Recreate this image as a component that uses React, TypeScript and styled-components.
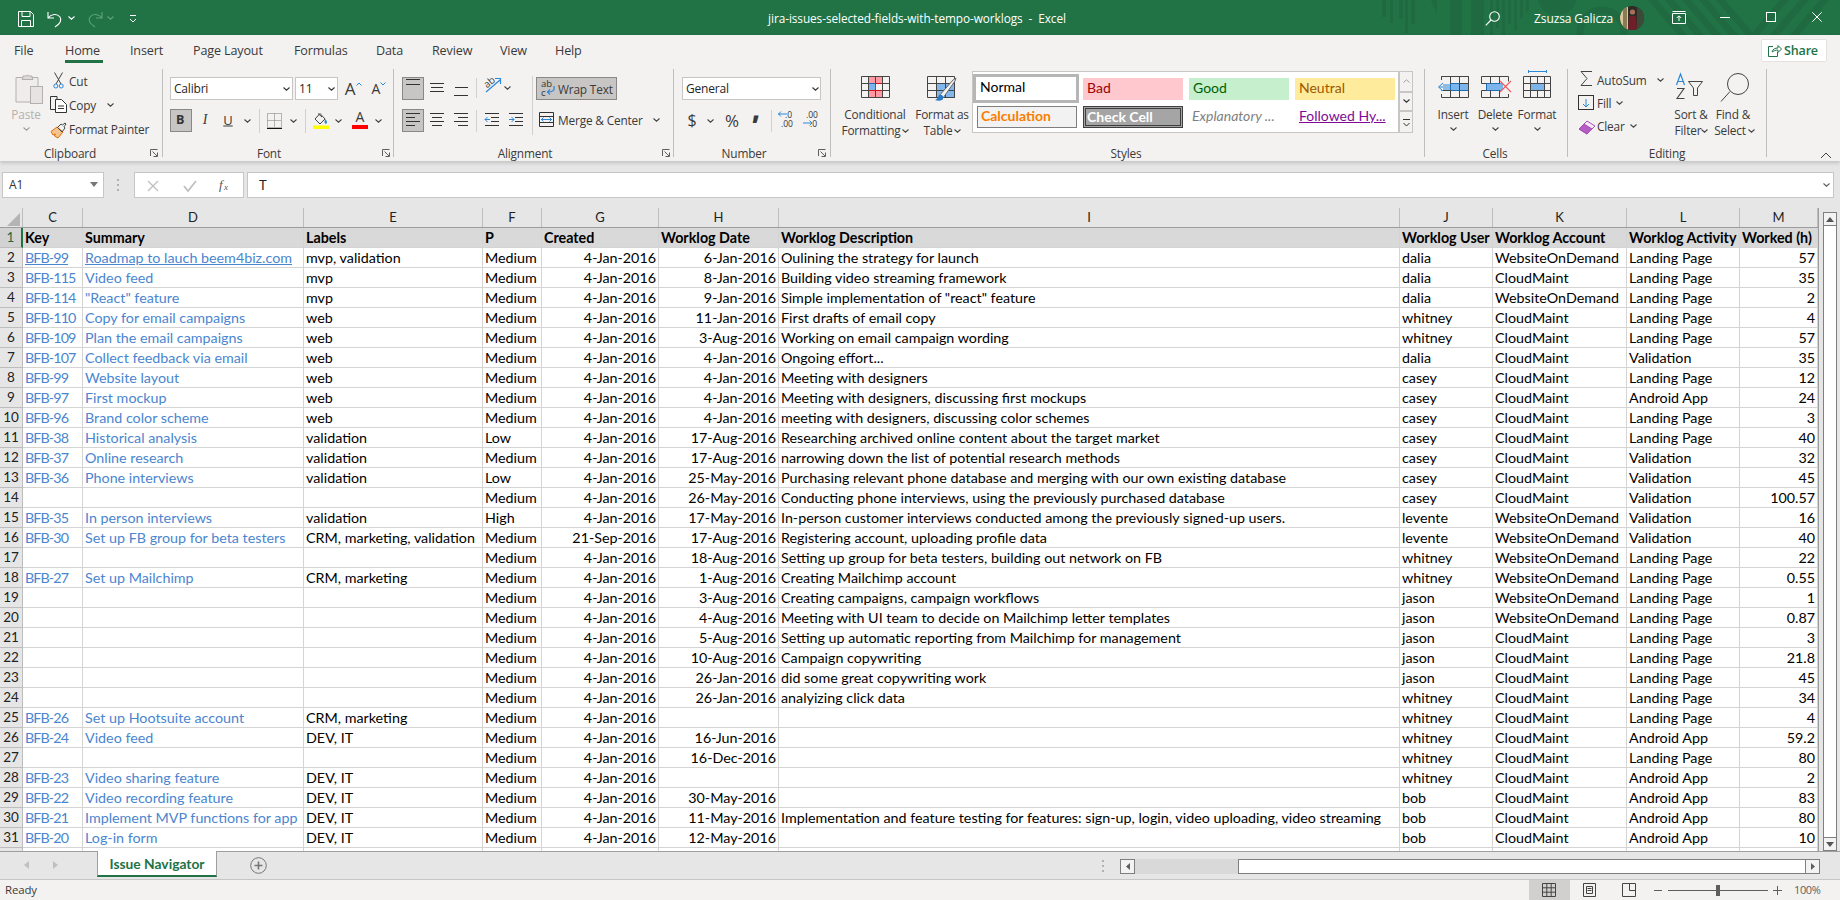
import React from "react";
import styled, { createGlobalStyle } from "styled-components";

const Global = createGlobalStyle`
  html, body { margin: 0; padding: 0; background: #e6e6e6; overflow: hidden; }
  #root { width: 1840px; height: 900px; }
`;
const UI = `"Open Sans","Noto Sans",sans-serif`;
const CELL = `Lato,"Open Sans",sans-serif`;
type P = { $x: number; $y: number };

const Window = styled.div`position: relative; width: 1840px; height: 900px; overflow: hidden; background: #e6e6e6; font-family: ${UI};`;
const TitleBar = styled.header`position: absolute; left: 0; top: 0; width: 1840px; height: 35px; background: #217346; color: #fff;`;
const TitleText = styled.div`position: absolute; left: 767px; top: 0; width: 300px; line-height: 36px; font-size: 11.8px; letter-spacing: -0.07px; white-space: pre; text-align: center;`;
const UserName = styled.div`position: absolute; left: 1534px; top: 0; line-height: 37px; font-size: 12px; letter-spacing: -0.1px; white-space: nowrap;`;
const Ic = styled.svg<P>`position: absolute; left: ${p => p.$x}px; top: ${p => p.$y}px; overflow: visible; display: block;`;

const Ribbon = styled.section`position: absolute; left: 0; top: 35px; width: 1840px; height: 126px; background: #f3f2f1; box-shadow: 0 2px 4px rgba(0,0,0,.16);`;
const Tab = styled.div<{ $x: number }>`
  position: absolute; left: ${p => p.$x}px; top: 6px; line-height: 19px; font-size: 12.6px; letter-spacing: -0.15px; color: #3b3a39; white-space: nowrap;
`;
const TabLine = styled.div`position: absolute; left: 65px; top: 25px; width: 38px; height: 3px; background: #217346;`;
const ShareBtn = styled.div`position: absolute; left: 1761px; top: 4px; width: 66px; height: 23px; box-sizing: border-box; background: #fff; border: 1px solid #e4e2e0; border-radius: 2px; color: #217346; font-size: 12.6px; font-weight: 600; line-height: 21px; padding-left: 22px; letter-spacing: -0.2px;`;
const Sep = styled.div<{ $x: number; $t?: number; $h?: number }>`position: absolute; left: ${p => p.$x}px; top: ${p => p.$t ?? 34}px; height: ${p => p.$h ?? 88}px; width: 1px; background: ${p => (p.$h ? "#d2d0ce" : "#c0bebc")};`;
const Lbl = styled.div<P & { $c?: boolean; $muted?: boolean }>`
  position: absolute; left: ${p => p.$x}px; top: ${p => p.$y - 35}px; transform: translate(${p => (p.$c ? "-50%" : "0")}, -50%);
  font-size: 11.85px; letter-spacing: -0.17px; line-height: 16px; color: ${p => (p.$muted ? "#b3b0ad" : "#3b3a39")}; white-space: nowrap;
`;
const Select = styled.div<{ $x: number; $w: number }>`
  position: absolute; left: ${p => p.$x}px; top: 42px; width: ${p => p.$w}px; height: 23px; box-sizing: border-box; background: #fff; border: 1px solid #c8c6c4;
  font-size: 12px; line-height: 21px; padding-left: 3px; color: #262626; letter-spacing: -0.2px;
`;
const Pressed = styled.div<{ $x: number; $y: number; $w: number }>`
  position: absolute; left: ${p => p.$x}px; top: ${p => p.$y - 35}px; width: ${p => p.$w}px; height: 23px; box-sizing: border-box; background: #c8c6c4; border: 1px solid #8a8886;
`;
const BoldGlyph = styled.div`position: absolute; left: 176px; top: 77px; font: 700 12.5px/16px ${UI}; color: #333;`;
const Glyph = styled.div<P & { $size: number; $italic?: boolean; $under?: boolean; $heavy?: boolean }>`
  position: absolute; left: ${p => p.$x}px; top: ${p => p.$y - 35}px; transform: translate(-50%, -50%); font-size: ${p => p.$size}px; line-height: 1; color: #3b3a39;
  font-weight: ${p => (p.$heavy ? 800 : 400)};
  font-style: ${p => (p.$italic ? "italic" : "normal")}; text-decoration: ${p => (p.$under ? "underline" : "none")}; font-family: ${p => (p.$italic ? `"Liberation Serif",serif` : UI)};
`;
const Gallery = styled.div`position: absolute; left: 972px; top: 36px; width: 427px; height: 62px; box-sizing: border-box; background: #fff; border: 1px solid #c8c6c4;`;
const StyleChip = styled.div<{ $x: number; $y: number; $bg?: string; $fg: string; $bold?: boolean; $italic?: boolean; $border?: string; $under?: boolean; $lh: number; $pad: number }>`
  position: absolute; left: ${p => p.$x - 972}px; top: ${p => p.$y - 71}px; width: 100px; height: 22px; box-sizing: border-box; padding-left: ${p => p.$pad}px;
  background: ${p => p.$bg ?? "transparent"}; color: ${p => p.$fg}; border: ${p => p.$border ?? "none"};
  font-family: ${CELL}; font-size: 14px; line-height: ${p => p.$lh}px; font-weight: ${p => (p.$bold ? 700 : 400)}; font-style: ${p => (p.$italic ? "italic" : "normal")};
  white-space: nowrap; overflow: hidden; text-decoration: ${p => (p.$under ? "underline" : "none")};
`;
const NormalChip = styled.div`position: absolute; left: 0; top: 2px; width: 106px; height: 29px; box-sizing: border-box; border: 3px solid #b6b6b6; background: #fff; color: #000; font-family: ${CELL}; font-size: 14px; line-height: 20px; padding-left: 4px;`;
const GalBtn = styled.div<{ $t: number; $h: number }>`position: absolute; left: 1399px; top: ${p => p.$t - 35}px; width: 14px; height: ${p => p.$h}px; box-sizing: border-box; background: #f3f2f1; border: 1px solid #c8c6c4;`;

const FormulaBar = styled.section`position: absolute; left: 0; top: 165px; width: 1840px; height: 43px;`;
const NameBox = styled.div`position: absolute; left: 2px; top: 7px; width: 102px; height: 26px; box-sizing: border-box; background: #fff; border: 1px solid #c8c6c4; font: 12px/24px ${UI}; color: #333; padding-left: 6px;`;
const FxBox = styled.div`position: absolute; left: 134px; top: 7px; width: 110px; height: 26px; box-sizing: border-box; background: #fff; border: 1px solid #c8c6c4;`;
const FInput = styled.div`position: absolute; left: 247px; top: 7px; width: 1587px; height: 26px; box-sizing: border-box; background: #fff; border: 1px solid #c8c6c4; font: 13px/24px ${CELL}; padding-left: 11px; color: #222;`;
const Grip = styled.div`position: absolute; left: 117px; top: 14px; width: 2px; height: 2px; background: #b3b0ad; box-shadow: 0 5px 0 #b3b0ad, 0 10px 0 #b3b0ad;`;

const Sheet = styled.main`position: absolute; left: 0; top: 208px; width: 1818px; height: 643px; overflow: hidden; background: #fff; border-right: 1px solid #9e9e9e; box-sizing: content-box;`;
const COLS = "23px 60px 221px 179px 59px 117px 120px 621px 93px 134px 113px 78px";
const ColHead = styled.div`display: grid; grid-template-columns: ${COLS}; height: 20px; background: #e6e6e6; box-sizing: border-box; border-bottom: 1px solid #9c9c9c;`;
const ColCell = styled.div`height: 19px; box-sizing: border-box; border-right: 1px solid #bdbdbd; font: 13px/19px ${CELL}; color: #222; text-align: center; position: relative;`;
const Row = styled.div<{ $head?: boolean }>`display: grid; grid-template-columns: ${COLS}; height: 20px; background: ${p => (p.$head ? "#d9d9d9" : "#fff")};`;
const RowNum = styled.div<{ $sel?: boolean }>`
  box-sizing: border-box; height: 20px; background: ${p => (p.$sel ? "#d2d2d2" : "#e6e6e6")}; color: ${p => (p.$sel ? "#1f6b41" : "#222")};
  border-bottom: 1px solid #bdbdbd; border-right: ${p => (p.$sel ? "2px solid #217346" : "1px solid #bdbdbd")};
  font: 13.5px/19px ${CELL}; text-align: center;
`;
const Cell = styled.div<{ $right?: boolean; $link?: boolean; $under?: boolean; $head?: boolean; $key?: boolean }>`
  box-sizing: border-box; height: 20px; border-right: 1px solid #d4d4d4; border-bottom: 1px solid #d4d4d4; padding: 0 2px;
  font: ${p => (p.$head ? 700 : 400)} 14.3px/19px ${CELL}; color: ${p => (p.$link ? "#4a86cf" : "#000")};
  letter-spacing: ${p => (p.$key ? "-0.9px" : "0")};
  text-align: ${p => (p.$right ? "right" : "left")}; white-space: nowrap; overflow: ${p => (p.$head ? "hidden" : "visible")}; text-decoration: ${p => (p.$under ? "underline" : "none")};
`;
const VTrack = styled.div`position: absolute; left: 1823px; top: 212px; width: 14px; height: 639px; box-sizing: border-box; background: #fff; border: 1px solid #7f7f7f;`;
const VBtn = styled.div<{ $bottom?: boolean }>`position: absolute; left: -1px; ${p => (p.$bottom ? "bottom: -1px" : "top: -1px")}; width: 14px; height: 14px; box-sizing: border-box; background: #f3f3f3; border: 1px solid #7f7f7f;`;

const TabBar = styled.footer`position: absolute; left: 0; top: 851px; width: 1840px; height: 29px; background: #e6e6e6; border-top: 1px solid #9e9e9e; border-bottom: 1px solid #c8c6c4; box-sizing: border-box;`;
const SheetTab = styled.div`position: absolute; left: 97px; top: -1px; width: 120px; height: 26px; box-sizing: border-box; background: #fff; border: 1px solid #9e9e9e; border-top: 0; border-bottom: 2px solid #217346; font: 700 13.8px/26px ${CELL}; color: #217346; text-align: center;`;
const HTrack = styled.div`position: absolute; left: 1120px; top: 7px; width: 700px; height: 15px; background: #d9d9d9;`;
const HBtn = styled.div<{ $right?: boolean }>`position: absolute; ${p => (p.$right ? "right: 0" : "left: 0")}; top: 0; width: 15px; height: 15px; box-sizing: border-box; background: #f3f3f3; border: 1px solid #7f7f7f;`;
const HThumb = styled.div`position: absolute; left: 118px; top: 0; width: 568px; height: 15px; box-sizing: border-box; background: #fff; border: 1px solid #7f7f7f;`;
const StatusBar = styled.footer`position: absolute; left: 0; top: 880px; width: 1840px; height: 20px; background: #f3f2f1; font-size: 11.4px; color: #3b3a39;`;
const Ready = styled.div`position: absolute; left: 5px; top: 0; line-height: 20px; letter-spacing: -0.1px;`;
const ViewActive = styled.div`position: absolute; left: 1529px; top: 0; width: 41px; height: 20px; background: #d2d0ce;`;
const Zoom = styled.div`position: absolute; left: 1794px; top: 0; line-height: 20px; letter-spacing: -0.4px; color: #605e5c; font-size: 11px;`;
const Slider = styled.div`position: absolute; left: 1668px; top: 10px; width: 100px; height: 1px; background: #605e5c;`;
const SliderThumb = styled.div`position: absolute; left: 48px; top: -5px; width: 4px; height: 11px; background: #605e5c;`;
const Blue = "#2b88d8";

const Chev = ({ x, y, c = "#444" }: { x: number; y: number; c?: string }) => (
  <Ic $x={x - 3.5} $y={y - 2} width="7" height="4" viewBox="0 0 7 4"><path d="M.5.5 3.5 3.2 6.5.5" fill="none" stroke={c} strokeWidth="1.1" /></Ic>
);
/* chevron in the ribbon, given in page coordinates */
const RC = ({ x, y, c }: { x: number; y: number; c?: string }) => <Chev x={x} y={y - 35} c={c} />;
const Launcher = ({ x }: { x: number }) => (
  <Ic $x={x - 4} $y={114} width="8" height="8" viewBox="0 0 8 8" fill="none" stroke="#605e5c"><path d="M.5 7V.5H7.5M7.5 3.500v4h-4M2.500 2.500l4.500 4.500" /></Ic>
);
const Lines = ({ x, y, rows }: { x: number; y: number; rows: [number, number, number][] }) => (
  <Ic $x={x} $y={y} width="15" height="16" viewBox="0 0 15 16" stroke="#333" strokeWidth="1">
    {rows.map((r, i) => <line key={i} x1={r[0]} x2={r[1]} y1={r[2] + 0.5} y2={r[2] + 0.5} />)}
  </Ic>
);

const LP = "Landing Page", AA = "Android App", CM = "CloudMaint", WD = "WebsiteOnDemand", V = "Validation", M = "Medium", J = "4-Jan-2016";
type R = [string, string, string, string, string, string, string, string, string, string, string];
const rows: R[] = [
  ["BFB-99", "Roadmap to lauch beem4biz.com", "mvp, validation", M, J, "6-Jan-2016", "Oulining the strategy for launch", "dalia", WD, LP, "57"],
  ["BFB-115", "Video feed", "mvp", M, J, "8-Jan-2016", "Building video streaming framework", "dalia", CM, LP, "35"],
  ["BFB-114", "\"React\" feature", "mvp", M, J, "9-Jan-2016", "Simple implementation of \"react\" feature", "dalia", WD, LP, "2"],
  ["BFB-110", "Copy for email campaigns", "web", M, J, "11-Jan-2016", "First drafts of email copy", "whitney", CM, LP, "4"],
  ["BFB-109", "Plan the email campaigns", "web", M, J, "3-Aug-2016", "Working on email campaign wording", "whitney", CM, LP, "57"],
  ["BFB-107", "Collect feedback via email", "web", M, J, "4-Jan-2016", "Ongoing effort...", "dalia", CM, V, "35"],
  ["BFB-99", "Website layout", "web", M, J, "4-Jan-2016", "Meeting with designers", "casey", CM, LP, "12"],
  ["BFB-97", "First mockup", "web", M, J, "4-Jan-2016", "Meeting with designers, discussing first mockups", "casey", CM, AA, "24"],
  ["BFB-96", "Brand color scheme", "web", M, J, "4-Jan-2016", "meeting with designers, discussing color schemes", "casey", CM, LP, "3"],
  ["BFB-38", "Historical analysis", "validation", "Low", J, "17-Aug-2016", "Researching archived online content about the target market", "casey", CM, LP, "40"],
  ["BFB-37", "Online research", "validation", M, J, "17-Aug-2016", "narrowing down the list of potential research methods", "casey", CM, V, "32"],
  ["BFB-36", "Phone interviews", "validation", "Low", J, "25-May-2016", "Purchasing relevant phone database and merging with our own existing database", "casey", CM, V, "45"],
  ["", "", "", M, J, "26-May-2016", "Conducting phone interviews, using the previously purchased database", "casey", CM, V, "100.57"],
  ["BFB-35", "In person interviews", "validation", "High", J, "17-May-2016", "In-person customer interviews conducted among the previously signed-up users.", "levente", WD, V, "16"],
  ["BFB-30", "Set up FB group for beta testers", "CRM, marketing, validation", M, "21-Sep-2016", "17-Aug-2016", "Registering account, uploading profile data", "levente", WD, V, "40"],
  ["", "", "", M, J, "18-Aug-2016", "Setting up group for beta testers, building out network on FB", "whitney", WD, LP, "22"],
  ["BFB-27", "Set up Mailchimp", "CRM, marketing", M, J, "1-Aug-2016", "Creating Mailchimp account", "whitney", WD, LP, "0.55"],
  ["", "", "", M, J, "3-Aug-2016", "Creating campaigns, campaign workflows", "jason", WD, LP, "1"],
  ["", "", "", M, J, "4-Aug-2016", "Meeting with UI team to decide on Mailchimp letter templates", "jason", WD, LP, "0.87"],
  ["", "", "", M, J, "5-Aug-2016", "Setting up automatic reporting from Mailchimp for management", "jason", CM, LP, "3"],
  ["", "", "", M, J, "10-Aug-2016", "Campaign copywriting", "jason", CM, LP, "21.8"],
  ["", "", "", M, J, "26-Jan-2016", "did some great copywriting work", "jason", CM, LP, "45"],
  ["", "", "", M, J, "26-Jan-2016", "analyizing click data", "whitney", CM, LP, "34"],
  ["BFB-26", "Set up Hootsuite account", "CRM, marketing", M, J, "", "", "whitney", CM, LP, "4"],
  ["BFB-24", "Video feed", "DEV, IT", M, J, "16-Jun-2016", "", "whitney", CM, AA, "59.2"],
  ["", "", "", M, J, "16-Dec-2016", "", "whitney", CM, LP, "80"],
  ["BFB-23", "Video sharing feature", "DEV, IT", M, J, "", "", "whitney", CM, AA, "2"],
  ["BFB-22", "Video recording feature", "DEV, IT", M, J, "30-May-2016", "", "bob", CM, AA, "83"],
  ["BFB-21", "Implement MVP functions for app", "DEV, IT", M, J, "11-May-2016", "Implementation and feature testing for features: sign-up, login, video uploading, video streaming", "bob", CM, AA, "80"],
  ["BFB-20", "Log-in form", "DEV, IT", M, J, "12-May-2016", "", "bob", CM, AA, "10"],
  ["", "", "", "", "", "", "", "", "", "", ""],
];
const heads = ["Key", "Summary", "Labels", "P", "Created", "Worklog Date", "Worklog Description", "Worklog User", "Worklog Account", "Worklog Activity", "Worked (h)"];
const letters = ["C", "D", "E", "F", "G", "H", "I", "J", "K", "L", "M"];
const tabs: [string, number][] = [["File", 14], ["Home", 65], ["Insert", 130], ["Page Layout", 193], ["Formulas", 294], ["Data", 376], ["Review", 432], ["View", 500], ["Help", 555]];

const TitlePattern = () => (
  <Ic $x={1370} $y={0} width="470" height="35" viewBox="0 0 470 35" fill="#1f6a41">
    <rect x="12" width="4" height="17" /><rect x="20" width="3" height="23" /><rect x="29" width="4" height="19" /><rect x="35" width="3" height="33" /><rect x="41" width="4" height="24" />
    <path d="M61 0h6v15z" /><rect x="80" width="12" height="35" /><rect x="101" width="13" height="35" />
    <rect x="120" width="3" height="35" /><rect x="126" width="3" height="28" /><rect x="132" width="3" height="35" /><rect x="138" width="3" height="24" /><rect x="144" width="3" height="30" /><rect x="150" width="3" height="18" /><rect x="156" width="3" height="12" />
    <path d="M168 0h38c-2 9-9 15-19 15s-17-6-19-15z" />
    <circle cx="232" cy="32" r="22" fill="none" stroke="#1f6a41" strokeWidth="7" />
    <path d="M278 0h9l30 35h-9zM295 0h9l30 35h-9zM312 0h9l30 35h-9zM329 0h9l30 35h-9zM346 0h9l30 35h-9zM380 35l30-35h9l-30 35zM400 35l30-35h9l-30 35zM420 35l30-35h9l-30 35z" />
  </Ic>
);

export default function App() {
  return (
    <Window>
      <Global />
      <TitleBar>
        <TitlePattern />
        <Ic $x={18} $y={11} width="16" height="16" viewBox="0 0 16 16" fill="none" stroke="#fff"><path d="M.5.5h12l3 3v12H.5zM4 .5v5h8v-5M3.500 15.500v-6h9v6" /></Ic>
        <Ic $x={47} $y={11} width="16" height="17" viewBox="0 0 16 17" fill="none" stroke="#fff" strokeWidth="1.1"><path d="M1 1v6h6M1 7c3-4 9-5 12-1 2 3 1 6-5 10" /></Ic>
        <Chev x={71} y={18} c="#fff" />
        <Ic $x={87} $y={11} width="16" height="17" viewBox="0 0 16 17" fill="none" stroke="#5fa27c" strokeWidth="1.1"><path d="M15 1v6H9M15 7C12 3 6 2 3 6c-2 3-1 6 5 10" /></Ic>
        <Chev x={110} y={18} c="#5fa27c" />
        <Ic $x={129} $y={15} width="8" height="9" viewBox="0 0 8 9" fill="none" stroke="#fff"><path d="M1 .5h6M1 4l3 3 3-3" /></Ic>
        <TitleText>{"jira-issues-selected-fields-with-tempo-worklogs  -  Excel"}</TitleText>
        <Ic $x={1485} $y={11} width="15" height="15" viewBox="0 0 15 15" fill="none" stroke="#fff" strokeWidth="1.1"><circle cx="9.500" cy="5.500" r="4.800" /><path d="M6 9 .8 14.400" /></Ic>
        <UserName>Zsuzsa Galicza</UserName>
        <Ic $x={1620} $y={6} width="24" height="24" viewBox="0 0 24 24">
          <defs><clipPath id="av"><circle cx="12" cy="12" r="12" /></clipPath></defs>
          <g clipPath="url(#av)"><rect width="24" height="24" fill="#2e2a26" /><rect width="8" height="24" fill="#d8c69c" /><rect x="3" width="4" height="24" fill="#8c7a52" /><rect x="17" width="7" height="24" fill="#3d4a38" /><circle cx="12.500" cy="6" r="2.600" fill="#a8705a" /><path d="M9 10h7l1 14H8z" fill="#6e1f28" /></g>
        </Ic>
        <Ic $x={1672} $y={11} width="14" height="13" viewBox="0 0 14 13" fill="none" stroke="#fff"><path d="M.5 2.500h13v10H.5zM.5 .5h13M7 10V5M4.800 7 7 4.800 9.200 7" /></Ic>
        <Ic $x={1720} $y={17} width="10" height="1" viewBox="0 0 10 1"><rect width="10" height="1" fill="#fff" /></Ic>
        <Ic $x={1766} $y={12} width="10" height="10" viewBox="0 0 10 10" fill="none" stroke="#fff"><rect x=".5" y=".5" width="9" height="9" /></Ic>
        <Ic $x={1812} $y={12} width="10" height="10" viewBox="0 0 10 10" fill="none" stroke="#fff"><path d="M.3.3l9.400 9.400M9.700.3.3 9.700" /></Ic>
      </TitleBar>

      <Ribbon>
        {tabs.map(([t, x]) => <Tab key={t} $x={x}>{t}</Tab>)}
        <TabLine />
        <ShareBtn>Share</ShareBtn>
        <Ic $x={1768} $y={9} width="14" height="13" viewBox="0 0 14 13" fill="none" stroke="#217346"><path d="M5 2.500H.5v10h9V8M4 8c1-3 3-4 6-4V1.500L13.500 5 10 8.500V6c-2.500 0-4.500 1-6 2z" /></Ic>
        {[162, 393, 673, 830, 1424, 1567, 1766].map(x => <Sep key={x} $x={x} />)}

        {/* Clipboard */}
        <Ic $x={15} $y={38} width="28" height="31" viewBox="0 0 28 31" fill="#eeedec" stroke="#b3b0ad"><path d="M1 4.500h22V29H1z" /><path d="M8 4.500V3h3a2 2 0 0 1 3 0h3v1.500l1 2H7z" fill="#dcdbd9" /><rect x="15.500" y="13.500" width="12" height="17" fill="#e5e4e2" /></Ic>
        <Lbl $x={26} $y={114} $c $muted>Paste</Lbl>
        <RC x={26} y={129} c="#a19f9d" />
        <Ic $x={53} $y={37} width="11" height="17" viewBox="0 0 11 17" fill="none"><path d="M1.500.5 8 12M9.500.5 3 12" stroke="#444" /><circle cx="2.800" cy="14" r="2" stroke={Blue} /><circle cx="8.200" cy="14" r="2" stroke={Blue} /></Ic>
        <Lbl $x={69} $y={81}>Cut</Lbl>
        <Ic $x={50} $y={61} width="17" height="17" viewBox="0 0 17 17" fill="#fff" stroke="#333"><path d="M5 13.500H.5V.5H7V4" fill="none" /><path d="M5.500 3.500h6l5 5v8h-11z" /><path d="M8 10h6M8 12.500h6" /></Ic>
        <Lbl $x={69} $y={105}>Copy</Lbl>
        <RC x={110} y={105} />
        <Ic $x={50} $y={87} width="17" height="17" viewBox="0 0 17 17" fill="none"><path d="M1 9.500 7 5l6 5-5 6-3.500-2 1-2-2.500 1z" fill="#f7c38a" stroke="#d9700d" /><path d="M7.500 5.500 11 2l1.500 1L15 1l1 1-2 2.800 1 1.200-3 4z" stroke="#444" /></Ic>
        <Lbl $x={69} $y={129}>Format Painter</Lbl>
        <Lbl $x={70} $y={153} $c>Clipboard</Lbl>
        <Launcher x={154} />

        {/* Font */}
        <Select $x={170} $w={123}>Calibri</Select>
        <RC x={286} y={89} c="#333" />
        <Select $x={295} $w={43}>11</Select>
        <RC x={331} y={89} c="#333" />
        <Glyph $x={350} $y={88} $size={17}>A</Glyph>
        <Ic $x={356} $y={47} width="6" height="4" viewBox="0 0 6 4" fill="none" stroke={Blue}><path d="M.5 3.500 3 1l2.500 2.500" /></Ic>
        <Glyph $x={376} $y={89} $size={14}>A</Glyph>
        <Ic $x={380} $y={47} width="6" height="4" viewBox="0 0 6 4" fill="none" stroke={Blue}><path d="M.5.5 3 3l2.500-2.500" /></Ic>
        <Pressed $x={170} $y={109} $w={22} />
        <BoldGlyph>B</BoldGlyph>
        <Glyph $x={205} $y={120} $size={14} $italic>I</Glyph>
        <Glyph $x={228} $y={120} $size={13} $under>U</Glyph>
        <RC x={247} y={121} />
        <Sep $x={259} $t={74} $h={24} />
        <Ic $x={267} $y={78} width="15" height="16" viewBox="0 0 15 16" fill="none" stroke="#777" strokeDasharray="1 1"><path d="M.5.5h14v14H.5zM7.500.5v14M.5 7.500h14" /><path d="M0 15.500h15" stroke="#111" strokeDasharray="none" /></Ic>
        <RC x={293} y={121} />
        <Sep $x={305} $t={74} $h={24} />
        <Ic $x={313} $y={76} width="16" height="18" viewBox="0 0 16 18"><path d="M2 8 7 2.500 12 8 7 13z" fill="none" stroke="#444" /><path d="M5 2.500 9 6" stroke="#444" /><path d="M12 8c2 2 2.500 3 1.500 4.500-1 .8-2 0-2-1.500z" fill={Blue} /><rect x="0" y="14.500" width="16" height="3.500" fill="#ffff00" /></Ic>
        <RC x={338} y={121} />
        <Glyph $x={360} $y={117} $size={14}>A</Glyph>
        <Ic $x={352} $y={90} width="16" height="4" viewBox="0 0 16 4"><rect width="16" height="4" fill="#ff0000" /></Ic>
        <RC x={378} y={121} />
        <Lbl $x={269} $y={153} $c>Font</Lbl>
        <Launcher x={386} />

        {/* Alignment */}
        <Pressed $x={402} $y={77} $w={22} />
        <Lines x={406} y={44} rows={[[0, 14, 0], [0, 14, 5]]} />
        <Lines x={430} y={48} rows={[[0, 14, 0], [1, 13, 4], [0, 14, 8]]} />
        <Lines x={454} y={52} rows={[[1, 14, 0], [0, 14, 8]]} />
        <Sep $x={476} $t={43} $h={20} />
        <Ic $x={484} $y={40} width="19" height="20" viewBox="0 0 19 20" fill="none"><path d="M2 17 16 5M11 3.500h5.500V9" stroke={Blue} strokeWidth="1.2" /><text x="0" y="11" fontSize="10" fill="#444" transform="rotate(-40 5 8)" fontFamily="Open Sans">ab</text></Ic>
        <RC x={507} y={88} />
        <Sep $x={532} $t={41} $h={59} />
        <Pressed $x={536} $y={77} $w={81} />
        <Ic $x={541} $y={42} width="15" height="20" viewBox="0 0 15 20"><text x="0" y="10" fontSize="9.500" fill="#333" fontFamily="Open Sans">ab</text><text x="0" y="19" fontSize="9.500" fill="#333" fontFamily="Open Sans">c</text><path d="M13 9c1 5-2 6-6 6M9 12.500 6.500 15 9 17.500" fill="none" stroke={Blue} strokeWidth="1.2" /></Ic>
        <Lbl $x={558} $y={89}>Wrap Text</Lbl>
        <Pressed $x={402} $y={109} $w={22} />
        <Lines x={406} y={78} rows={[[0, 14, 0], [0, 9, 4], [0, 14, 8], [0, 9, 12]]} />
        <Lines x={430} y={78} rows={[[0, 14, 0], [2, 12, 4], [0, 14, 8], [2, 12, 12]]} />
        <Lines x={454} y={78} rows={[[0, 14, 0], [4, 14, 4], [0, 14, 8], [4, 14, 12]]} />
        <Sep $x={476} $t={75} $h={22} />
        <Ic $x={485} $y={78} width="14" height="13" viewBox="0 0 14 13"><g stroke="#333"><path d="M0 .5h14M6 4.500h8M6 8.500h8M0 12.500h14" /></g><path d="M5 6.500H0M2.500 4 0 6.500 2.500 9" fill="none" stroke={Blue} /></Ic>
        <Ic $x={509} $y={78} width="14" height="13" viewBox="0 0 14 13"><g stroke="#333"><path d="M0 .5h14M6 4.500h8M6 8.500h8M0 12.500h14" /></g><path d="M0 6.500h5M2.500 4 5 6.500 2.500 9" fill="none" stroke={Blue} /></Ic>
        <Ic $x={539} $y={77} width="15" height="15" viewBox="0 0 15 15" fill="none"><path d="M.5.500h14v14H.5z" stroke="#333" /><path d="M.5 4.500h14M.5 10.500h14" stroke="#333" /><path d="M2 7.500h11M4.500 5.500l-2 2 2 2M10.500 5.500l2 2-2 2" stroke={Blue} /></Ic>
        <Lbl $x={558} $y={120}>Merge &amp; Center</Lbl>
        <RC x={656} y={120} />
        <Lbl $x={525} $y={153} $c>Alignment</Lbl>
        <Launcher x={666} />

        {/* Number */}
        <Select $x={682} $w={139}>General</Select>
        <RC x={815} y={89} c="#333" />
        <Glyph $x={692} $y={120} $size={16}>$</Glyph>
        <RC x={710} y={121} />
        <Glyph $x={732} $y={120} $size={17}>%</Glyph>
        <Glyph $x={756} $y={109} $size={26} $heavy>,</Glyph>
        <Sep $x={771} $t={75} $h={22} />
        <Ic $x={778} $y={74} width="18" height="20" viewBox="0 0 18 20"><text x="7" y="8.500" fontSize="8.500" fill="#333" fontFamily="Open Sans">.0</text><text x="3" y="18" fontSize="8.500" fill="#333" fontFamily="Open Sans">.00</text><path d="M9 5H0M3 2.500.5 5 3 7.500" fill="none" stroke={Blue} /></Ic>
        <Ic $x={803} $y={74} width="18" height="20" viewBox="0 0 18 20"><text x="3" y="8.500" fontSize="8.500" fill="#333" fontFamily="Open Sans">.00</text><text x="7" y="18" fontSize="8.500" fill="#333" fontFamily="Open Sans">.0</text><path d="M0 14h9M6.500 11.500 9 14l-2.500 2.500" fill="none" stroke={Blue} /></Ic>
        <Lbl $x={744} $y={153} $c>Number</Lbl>
        <Launcher x={822} />

        {/* Styles */}
        <Ic $x={861} $y={41} width="29" height="22" viewBox="0 0 29 22">
          <rect x="7.500" y=".5" width="14" height="7" fill="#ff9aa2" stroke="#d0121b" />
          <rect x="7.500" y="7.500" width="7" height="7" fill="#7cb5ec" stroke="#1f6fb5" />
          <rect x="7.500" y="14.500" width="14" height="7" fill="#ff9aa2" stroke="#d0121b" />
          <path d="M.5.5h28v21H.5zM7.500.5v21M21.500.5v21M14.500.5v7M14.500 14.500v7M.5 7.500h7M.5 14.500h7M21.500 7.500h7M21.500 14.500h7" fill="none" stroke="#444" />
        </Ic>
        <Lbl $x={875} $y={114} $c>Conditional</Lbl>
        <Lbl $x={871} $y={130} $c>Formatting</Lbl>
        <RC x={905} y={131} />
        <Ic $x={927} $y={41} width="30" height="28" viewBox="0 0 30 28">
          <rect x="9.500" y="7.500" width="18" height="14" fill="#80b8ee" stroke="#1f6fb5" />
          <path d="M.5.5h27v21H.5zM.5 7.500h27M.5 14.500h27M9.500.5v21M18.500.5v21" fill="none" stroke="#444" />
          <path d="M12 20 26 4l3-2-1 3-12 17z" fill="#f3f2f1" stroke="#666" />
          <path d="M12 19c3-1 5 1 4 4-1 2-5 2-8 1 2-1 3-2 4-5z" fill="#2b79c2" />
        </Ic>
        <Lbl $x={942} $y={114} $c>Format as</Lbl>
        <Lbl $x={938} $y={130} $c>Table</Lbl>
        <RC x={957} y={131} />
        <Gallery>
          <NormalChip>Normal</NormalChip>
          <StyleChip $x={1082} $y={77} $lh={20} $pad={4} $bg="#ffc7ce" $fg="#9c0006">Bad</StyleChip>
          <StyleChip $x={1188} $y={77} $lh={20} $pad={4} $bg="#c6efce" $fg="#006100">Good</StyleChip>
          <StyleChip $x={1294} $y={77} $lh={20} $pad={4} $bg="#ffeb9c" $fg="#9c5700">Neutral</StyleChip>
          <StyleChip $x={976} $y={105} $lh={18} $pad={3} $bg="#f2f2f2" $fg="#fa7d00" $bold $border="1px solid #7f7f7f">Calculation</StyleChip>
          <StyleChip $x={1082} $y={105} $lh={15} $pad={1} $bg="#a5a5a5" $fg="#fff" $bold $border="3px double #3f3f3f">Check Cell</StyleChip>
          <StyleChip $x={1188} $y={105} $lh={20} $pad={3} $fg="#7f7f7f" $italic>Explanatory ...</StyleChip>
          <StyleChip $x={1294} $y={105} $lh={20} $pad={4} $fg="#7e0a96" $under>Followed Hy...</StyleChip>
        </Gallery>
        <GalBtn $t={71} $h={21} />
        <GalBtn $t={92} $h={19} />
        <GalBtn $t={111} $h={22} />
        <Ic $x={1403} $y={44} width="7" height="4" viewBox="0 0 7 4" fill="none" stroke="#a19f9d"><path d="M.5 3.500 3.500.8l3 2.700" /></Ic>
        <RC x={1406} y={101} c="#333" />
        <Ic $x={1403} $y={84} width="7" height="8" viewBox="0 0 7 8" fill="none" stroke="#333"><path d="M0 .5h7M.5 4l3 3 3-3" /></Ic>
        <Lbl $x={1126} $y={153} $c>Styles</Lbl>

        {/* Cells */}
        <Ic $x={1437} $y={41} width="33" height="24" viewBox="0 0 33 24">
          <rect x="13.500" y="7.500" width="18" height="7" fill="#7cb5ec" stroke="#1f6fb5" />
          <path d="M4.500 4V.5h27v21h-27V18M13.500.5v7M22.500.5v14M13.500 14.500v7M22.500 14.500v7M4.500.5h27M4.500 14.500h9M22.500 7.500h9" fill="none" stroke="#444" />
          <path d="M13 11H2M6 7l-4.500 4L6 15M13 9H6M13 13H6" fill="none" stroke={Blue} />
        </Ic>
        <Lbl $x={1453} $y={114} $c>Insert</Lbl>
        <RC x={1453} y={129} />
        <Ic $x={1481} $y={41} width="31" height="24" viewBox="0 0 31 24">
          <rect x="5.500" y="7.500" width="15" height="7" fill="#7cb5ec" stroke="#1f6fb5" />
          <path d="M22 8l-3-1v8l3-1z" fill="#7cb5ec" />
          <path d="M.5.5h27v5M.5.5v7h5M.5 14.500v7h20M27.500 18v3.500h-7M9.500.5v7M18.500.5v7M9.500 14.500v7M18.500 14.500v7M.5 14.500h5" fill="none" stroke="#444" />
          <path d="M19 5l11 11M30 5 19 16" stroke="#f25a5a" strokeWidth="1.1" />
        </Ic>
        <Lbl $x={1495} $y={114} $c>Delete</Lbl>
        <RC x={1495} y={129} />
        <Ic $x={1523} $y={35} width="29" height="30" viewBox="0 0 29 30">
          <path d="M5 1.500h19M5.500 0v3M23.500 0v3" stroke={Blue} />
          <rect x="7.500" y="13.500" width="14" height="7" fill="#7cb5ec" stroke="#1f6fb5" />
          <path d="M.5 6.500h27v21H.5zM.5 13.500h27M.5 20.500h27M7.500 6.500v21M21.500 6.500v21M14.500 6.500v7M14.500 20.500v7" fill="none" stroke="#444" />
        </Ic>
        <Lbl $x={1537} $y={114} $c>Format</Lbl>
        <RC x={1537} y={129} />
        <Lbl $x={1495} $y={153} $c>Cells</Lbl>

        {/* Editing */}
        <Ic $x={1580} $y={36} width="13" height="15" viewBox="0 0 13 15" fill="none" stroke="#444"><path d="M12 .5H1L7 7.500l-6 7h11" /></Ic>
        <Lbl $x={1597} $y={80}>AutoSum</Lbl>
        <RC x={1660} y={80} />
        <Ic $x={1578} $y={60} width="16" height="15" viewBox="0 0 16 15" fill="none"><rect x=".5" y=".5" width="15" height="14" stroke="#333" /><path d="M8 4v8M5 9l3 3 3-3" stroke={Blue} /></Ic>
        <Lbl $x={1597} $y={103}>Fill</Lbl>
        <RC x={1619} y={103} />
        <Ic $x={1578} $y={85} width="18" height="15" viewBox="0 0 18 15"><path d="M1 9l8-8 8 5-8 8z" fill="#f5e9f7" stroke="#a94db8" /><path d="M1 9l5-5 8 5-5 5z" fill="#b55cc4" stroke="#a94db8" /></Ic>
        <Lbl $x={1597} $y={126}>Clear</Lbl>
        <RC x={1633} y={126} />
        <Ic $x={1675} $y={38} width="30" height="27" viewBox="0 0 30 27" fill="none">
          <path d="M1.500 12 5.500 1l4 11M2.800 8.500h5.400" stroke={Blue} strokeWidth="1.2" />
          <path d="M2 15.500h7L2 25.500h7.500" stroke="#444" strokeWidth="1.1" />
          <path d="M13.500 8.500h14l-5 6.500v7.500h-4V15z" stroke="#444" />
        </Ic>
        <Lbl $x={1691} $y={114} $c>Sort &amp;</Lbl>
        <Lbl $x={1688} $y={130} $c>Filter</Lbl>
        <RC x={1704} y={131} />
        <Ic $x={1720} $y={38} width="29" height="30" viewBox="0 0 29 30" fill="none" stroke="#444"><circle cx="18" cy="11" r="10.500" /><path d="M10 18.500 1 28.500" /></Ic>
        <Lbl $x={1733} $y={114} $c>Find &amp;</Lbl>
        <Lbl $x={1730} $y={130} $c>Select</Lbl>
        <RC x={1751} y={131} />
        <Lbl $x={1667} $y={153} $c>Editing</Lbl>
        <Ic $x={1820} $y={117} width="12" height="7" viewBox="0 0 12 7" fill="none" stroke="#444"><path d="M1 6l5-5 5 5" /></Ic>
      </Ribbon>

      <FormulaBar>
        <NameBox>A1</NameBox>
        <Ic $x={90} $y={17} width="8" height="5" viewBox="0 0 8 5"><path d="M0 0h8L4 5z" fill="#777" /></Ic>
        <Grip />
        <FxBox />
        <Ic $x={147} $y={15} width="12" height="12" viewBox="0 0 12 12" fill="none" stroke="#c2c0be" strokeWidth="1.4"><path d="M1 1l10 10M11 1 1 11" /></Ic>
        <Ic $x={183} $y={15} width="14" height="12" viewBox="0 0 14 12" fill="none" stroke="#c2c0be" strokeWidth="1.8"><path d="M1 6l4 5 8-10" /></Ic>
        <Ic $x={219} $y={13} width="14" height="14" viewBox="0 0 14 14"><text x="0" y="11" fontSize="13" fontStyle="italic" fontFamily="Liberation Serif" fill="#555">f</text><text x="5" y="12" fontSize="9" fontStyle="italic" fontFamily="Liberation Serif" fill="#555">x</text></Ic>
        <FInput>T</FInput>
        <Chev x={1826} y={20} c="#605e5c" />
      </FormulaBar>

      <Sheet>
        <ColHead>
          <ColCell>
            <Ic $x={7} $y={5} width="13" height="13" viewBox="0 0 13 13"><path d="M13 0v13H0z" fill="#b4b4b4" /></Ic>
          </ColCell>
          {letters.map(l => <ColCell key={l}>{l}</ColCell>)}
        </ColHead>
        <Row $head>
          <RowNum $sel>1</RowNum>
          {heads.map(h => <Cell key={h} $head>{h}</Cell>)}
        </Row>
        {rows.map((r, i) => (
          <Row key={i}>
            <RowNum>{i + 2 < 32 ? i + 2 : ""}</RowNum>
            {r.map((v, c) => (
              <Cell key={c} $link={c < 2} $key={c === 0} $under={i === 0 && c < 2} $right={c === 4 || c === 5 || c === 10}>{v}</Cell>
            ))}
          </Row>
        ))}
      </Sheet>
      <VTrack>
        <VBtn><Ic $x={2} $y={4} width="8" height="5" viewBox="0 0 8 5"><path d="M4 0l4 5H0z" fill="#555" /></Ic></VBtn>
        <VBtn $bottom><Ic $x={2} $y={4} width="8" height="5" viewBox="0 0 8 5"><path d="M0 0h8L4 5z" fill="#555" /></Ic></VBtn>
      </VTrack>

      <TabBar>
        <Ic $x={24} $y={9} width="5" height="8" viewBox="0 0 5 8"><path d="M5 0v8L0 4z" fill="#c2c0be" /></Ic>
        <Ic $x={53} $y={9} width="5" height="8" viewBox="0 0 5 8"><path d="M0 0v8l5-4z" fill="#c2c0be" /></Ic>
        <SheetTab>Issue Navigator</SheetTab>
        <Ic $x={250} $y={5} width="17" height="17" viewBox="0 0 17 17" fill="none" stroke="#767676"><circle cx="8.500" cy="8.500" r="7.800" /><path d="M8.500 4.500v8M4.500 8.500h8" strokeWidth="1.6" /></Ic>
        <Ic $x={1102} $y={8} width="3" height="13" viewBox="0 0 3 13"><path d="M0 0h2v2H0zM0 5h2v2H0zM0 10h2v2H0z" fill="#b3b0ad" /></Ic>
        <HTrack>
          <HBtn><Ic $x={5} $y={3} width="4" height="7" viewBox="0 0 4 7"><path d="M4 0v7L0 3.500z" fill="#605e5c" /></Ic></HBtn>
          <HThumb />
          <HBtn $right><Ic $x={5} $y={3} width="4" height="7" viewBox="0 0 4 7"><path d="M0 0v7l4-3.500z" fill="#605e5c" /></Ic></HBtn>
        </HTrack>
      </TabBar>

      <StatusBar>
        <Ready>Ready</Ready>
        <ViewActive />
        <Ic $x={1542} $y={3} width="14" height="14" viewBox="0 0 14 14" fill="none" stroke="#444"><path d="M.5.5h13v13H.5zM4.800.5v13M9.200.5v13M.5 4.800h13M.5 9.200h13" /></Ic>
        <Ic $x={1583} $y={3} width="13" height="14" viewBox="0 0 13 14" fill="none" stroke="#444"><path d="M.5.5h12v13H.5zM3.500 3.500h6v7h-6zM4.500 5.500h4M4.500 7.500h4" /></Ic>
        <Ic $x={1622} $y={3} width="14" height="14" viewBox="0 0 14 14" fill="none" stroke="#444"><path d="M.5.5h13v13H.5zM7.500.5v7h6" /></Ic>
        <Ic $x={1654} $y={10} width="8" height="1" viewBox="0 0 8 1"><rect width="8" height="1" fill="#605e5c" /></Ic>
        <Slider><SliderThumb /></Slider>
        <Ic $x={1773} $y={6} width="9" height="9" viewBox="0 0 9 9"><path d="M0 4h9v1H0zM4 0h1v9H4z" fill="#605e5c" /></Ic>
        <Zoom>100%</Zoom>
      </StatusBar>
    </Window>
  );
}
